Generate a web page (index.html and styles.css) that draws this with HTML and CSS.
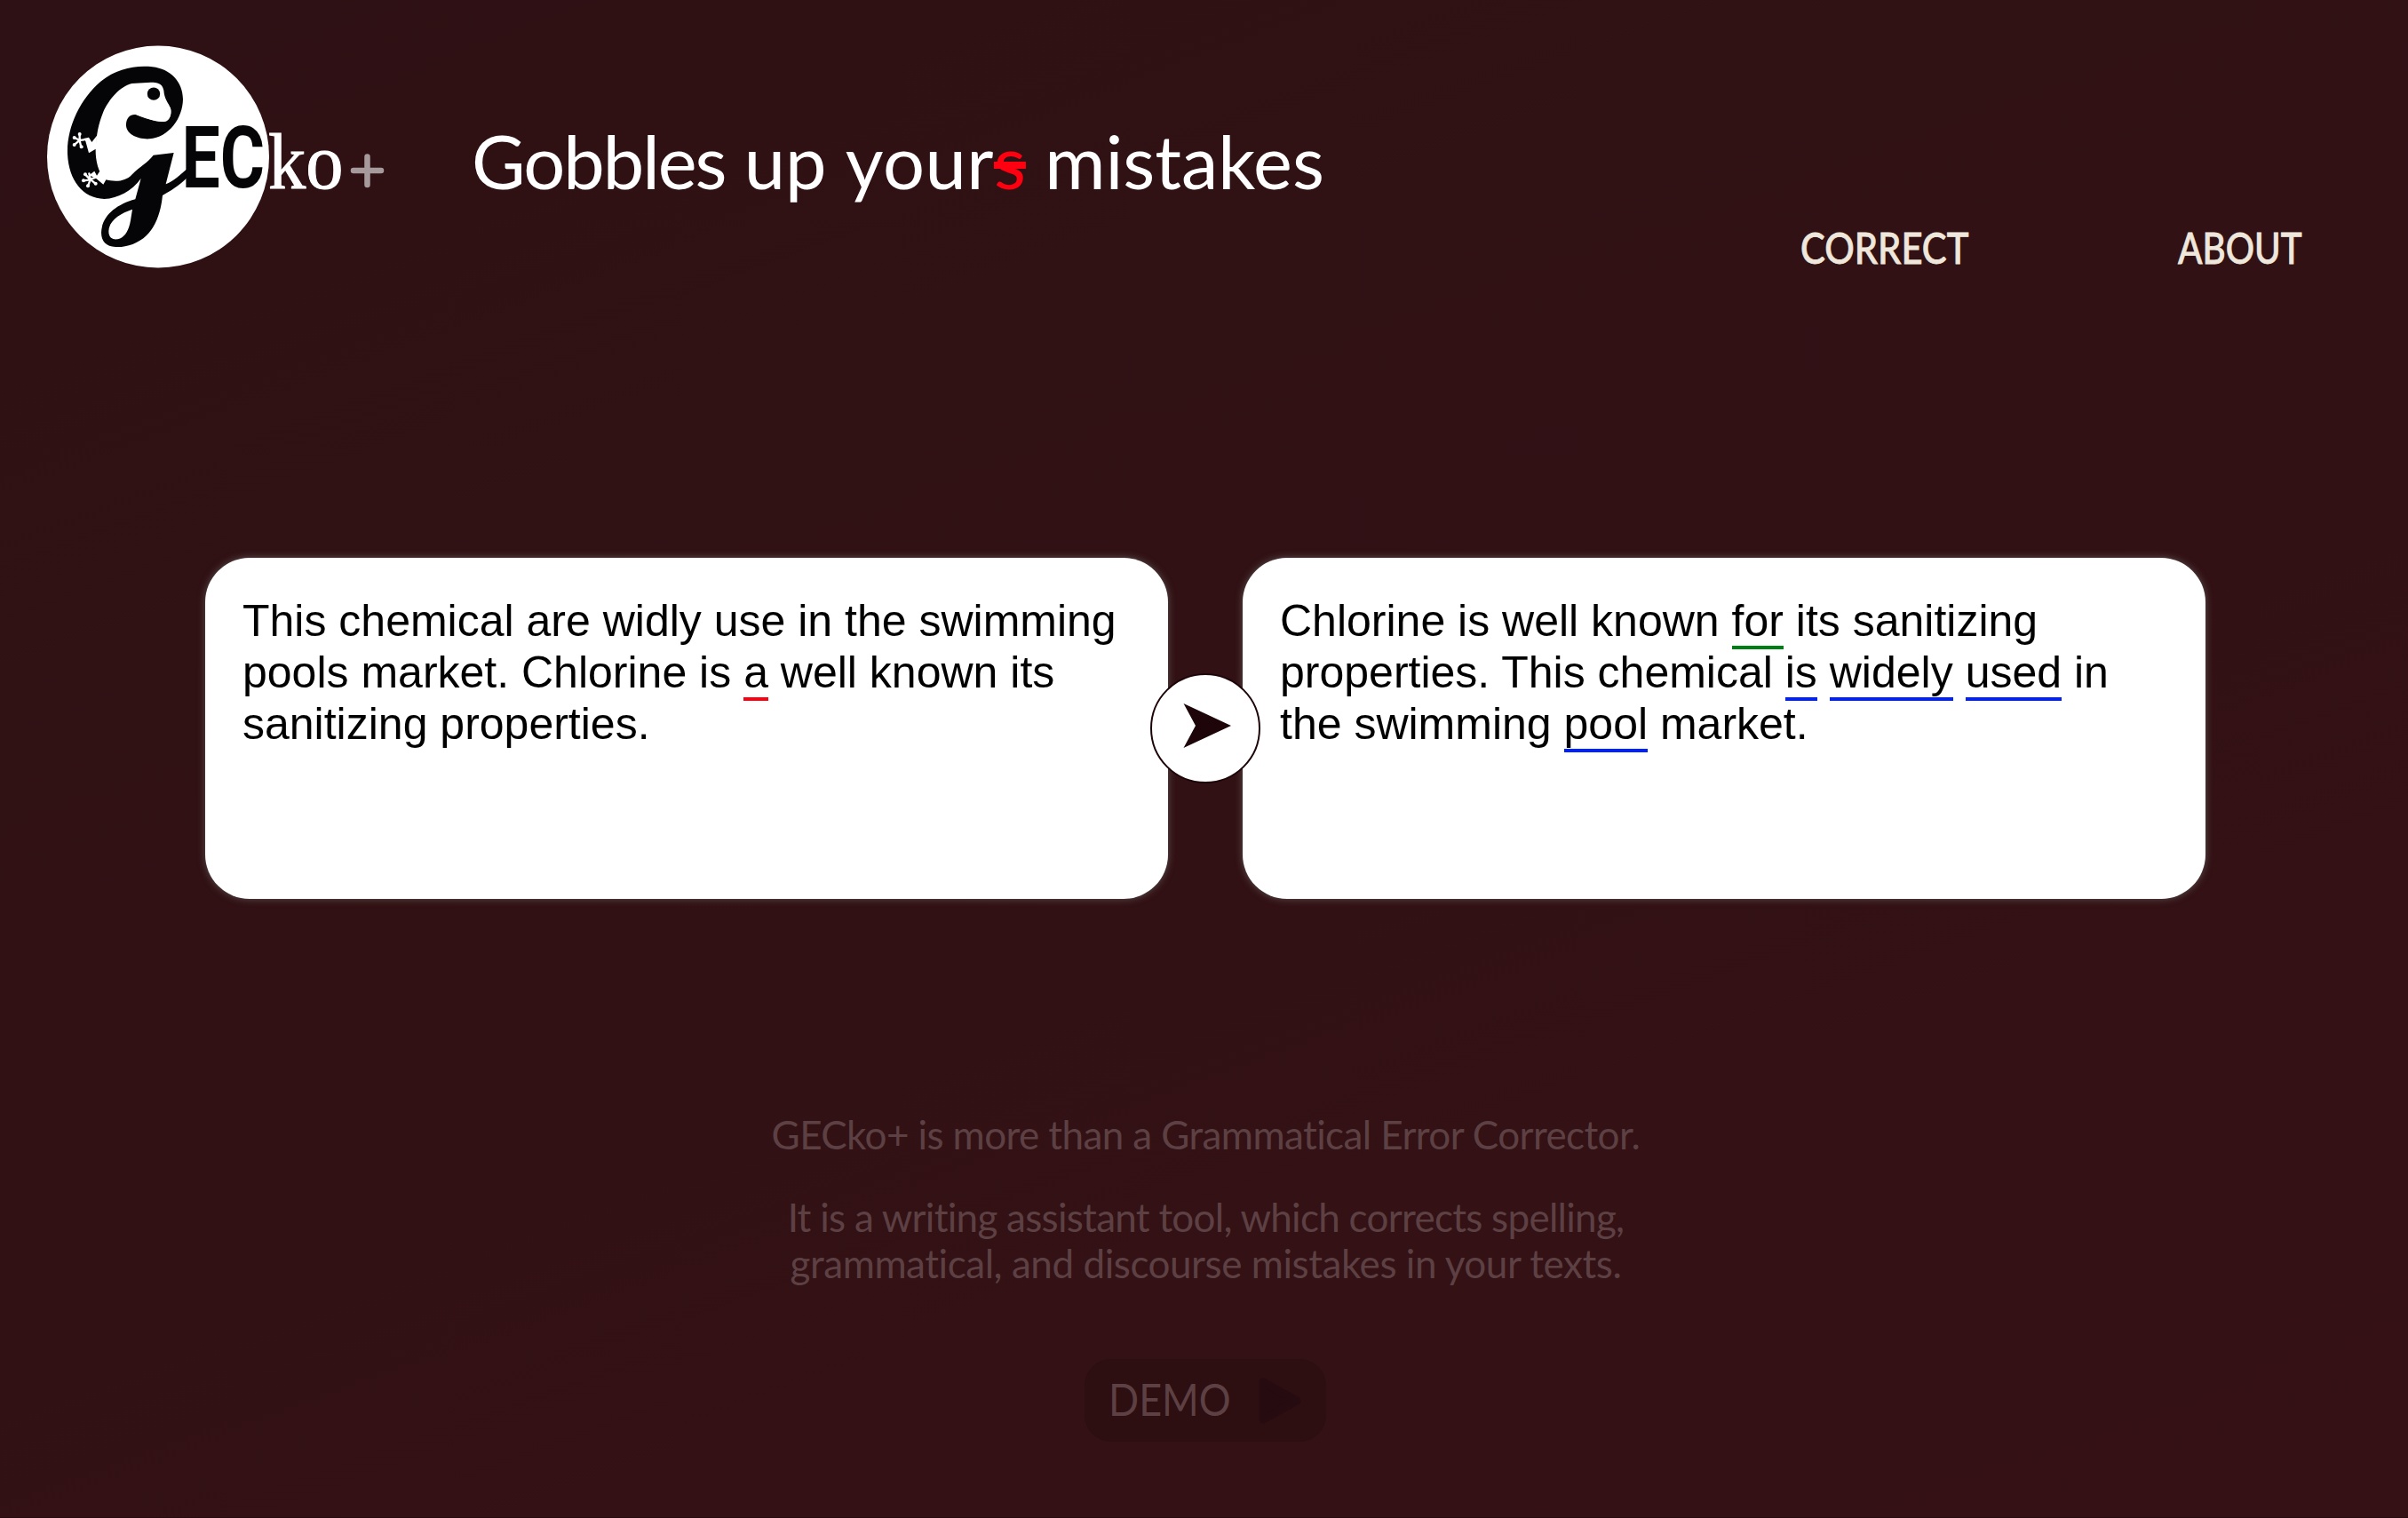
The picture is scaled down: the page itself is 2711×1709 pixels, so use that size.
FILE: index.html
```html
<!DOCTYPE html>
<html lang="en">
<head>
<meta charset="utf-8">
<title>GECko+</title>
<link rel="stylesheet" href="styles.css">
</head>
<body>
<div class="page">
  <header class="header">
    <svg class="logo" viewBox="0 0 400 270" role="img" aria-label="GECko+">
      <circle cx="138" cy="136.500" r="125" fill="#fff"/>
      <g transform="scale(.33333)">
        <path fill="#050507" d="M440 290C458 283 460 255 455 243C449 228 435 215 433 185C428 160 410 158 390 158L325 162C285 172 248 215 228 260C212 300 206 335 203 380C202 420 210 460 235 486C270 496 305 492 325 470C355 440 378 430 398 404L467 396L440 502C465 492 490 470 512 450L512 480C485 508 455 525 429 540C424 590 410 640 375 675C345 704 305 716 270 714C235 712 218 690 223 655C230 605 275 570 337 553L356 483C325 525 280 550 232 552C160 550 112 490 108 400C105 310 150 215 220 155C275 112 335 100 395 106C455 113 497 155 498 215C497 280 450 343 385 349C340 351 303 330 306 298C308 277 322 264 341 268C375 279 410 295 440 290ZM327 587C285 601 248 625 247 661C247 685 262 690 278 688C305 682 317 650 321 625Z"/>
        <path fill="#fff" d="M341 268C375 282 415 296 440 288C458 280 460 258 455 243L400 230L330 240Z"/>
        <circle cx="399" cy="197" r="21.500" fill="#050507"/>
        <path fill="#fff" d="M207 338L190 360L180 344L162 348L169 357L180 397L206 382ZM219 455L207 473L199 458L181 472L204 482L229 503L242 480Z"/>
        <path fill="none" stroke="#fff" stroke-linecap="round" stroke-width="7" d="M164 352L145 354M149 354L132 345M149 354L132 368M149 354L149 332M149 355L154 377M204 479L180 487M185 487L168 469M185 487L162 490M185 487L177 508M187 487L202 500M185 486L181 466"/>
        <g fill="#fff">
          <circle cx="131" cy="345" r="6"/><circle cx="131" cy="369" r="6"/><circle cx="149" cy="333" r="6"/><circle cx="155" cy="376" r="6"/>
          <circle cx="168" cy="469" r="6"/><circle cx="162" cy="490" r="6"/><circle cx="177" cy="508" r="6"/><circle cx="203" cy="500" r="6"/>
        </g>
      </g>
      <text class="logo-gec" transform="translate(164.500 171) scale(.8 1)">EC</text>
      <text class="logo-ko" transform="translate(262 171.500) scale(.96 1)">ko</text>
      <path d="M358 152H389M373.500 136.500V168" fill="none" stroke="#a69a9c" stroke-width="6.500" stroke-linecap="round"/>
    </svg>
    <h1 class="tagline"><span class="lead">Gobbles</span> up <span class="your">your</span><s class="typo">s</s> mistakes</h1>
    <nav class="nav"><a class="nav-link nav-correct">CORRECT</a><a class="nav-link nav-about">ABOUT</a></nav>
  </header>
  <main>
    <section class="example">
      <p class="card">This chemical are widly use in the swimming<br>pools market. Chlorine is <span class="mark red">a</span> well known its<br>sanitizing properties.</p>
      <p class="card">Chlorine is well known <span class="mark green">for</span> its sanitizing<br>properties. This chemical <span class="mark blue">is</span> <span class="mark blue">widely</span> <span class="mark blue">used</span> in<br>the swimming <span class="mark blue">pool</span> market.</p>
      <svg class="go" viewBox="0 0 124 124"><circle cx="62" cy="62" r="61" fill="#fff" stroke="#1e0509" stroke-width="2"/><path d="M37.500 34L91 59L37.500 84L51 59Z" fill="#1e0509"/></svg>
    </section>
    <section class="intro">
      <p class="line one">GECko+ is more than a Grammatical Error Corrector.</p>
      <p class="line two">It is a writing assistant tool, which corrects spelling,</p>
      <p class="line three">grammatical, and discourse mistakes in your texts.</p>
    </section>
    <div class="demo"><span class="demo-label">DEMO</span><svg class="play" viewBox="0 0 48 54"><path d="M5 6L43 27L5 48Z" fill="#260c10" stroke="#260c10" stroke-width="9" stroke-linejoin="round"/></svg></div>
  </main>
</div>
</body>
</html>
```
FILE: styles.css
```css
* { box-sizing: border-box; }
body { margin: 0; font-family: Lato, "Open Sans", sans-serif; font-variant-ligatures: none; }
.page { height: 1709px; overflow: hidden; background: linear-gradient(160deg, #2e1114, #351115); border-bottom: 1px solid #260c0f; }
.header { display: flex; height: 628px; padding-left: 40px; }
.logo { flex: none; width: 400px; height: 270px; margin-top: 40px; }
.logo-gec { font: 700 96px Roboto, sans-serif; fill: #050507; }
.logo-ko { font: 88px "Liberation Serif", serif; fill: #fff; stroke: #fff; stroke-width: 1px; }
.tagline { flex: none; width: 1400px; margin: 129px 0 0 91px; font-size: 83px; line-height: 104px; font-weight: 400; color: #fff; white-space: nowrap; }
.lead { letter-spacing: -2px; }
.your { letter-spacing: .5px; }
.typo { color: #ff0010; text-decoration-thickness: 8px; }
.nav { display: flex; margin-top: 249px; }
.nav-link { font-size: 48px; line-height: 60px; font-weight: 500; color: #efe7db; transform: scaleX(.87); transform-origin: left; -webkit-text-stroke: .8px #efe7db; }
.nav-correct { width: 425px; margin-left: 96px; }
.nav-about { transform: scaleX(.84); }
.example { position: relative; display: flex; gap: 84px; padding-left: 231px; }
.card { width: 1084px; height: 384px; margin: 0; padding: 42px; border-radius: 50px; background: #fff; color: #000; font: 50px/58px "Liberation Sans", Arial, sans-serif; box-shadow: 0 0 8px #5c5250; white-space: nowrap; }
.mark { border-bottom: 4px solid; border-color: var(--mark); }
.red { --mark: #ff0010; }
.green { --mark: #008013; }
.blue { --mark: #0021ff; }
.go { position: absolute; left: 1295px; top: 130px; width: 124px; height: 124px; }
.intro { padding: 239px 0 1px 4px; text-align: center; font-size: 44px; line-height: 52px; color: #5c4043; }
.line { margin: 0; white-space: nowrap; }
.one { margin-bottom: 41px; letter-spacing: -.6px; }
.two { letter-spacing: -.72px; }
.three { letter-spacing: -.45px; }
.demo { display: flex; align-items: center; width: 272px; height: 93px; margin: 81px 0 0 1221px; padding-left: 27px; border-radius: 30px; background: #2d0e11; }
.demo-label { width: 169px; padding-bottom: 4px; font-size: 51px; color: #5c4043; transform: scaleX(.88); transform-origin: left; }
.play { width: 48px; height: 54px; }
```
